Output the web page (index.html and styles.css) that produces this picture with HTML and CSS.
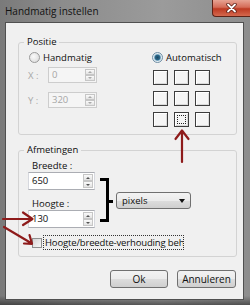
FILE: index.html
```html
<!DOCTYPE html>
<html lang="nl">
  <head>
    <meta charset="UTF-8" />
    <meta name="viewport" content="width=device-width, initial-scale=1.0" />
    <title>Handmatig instellen</title>
    <link rel="stylesheet" href="styles.css">
  </head>
  <body>
    <div class="window">
      <div class="titlebar">
        <span class="title">Handmatig instellen</span>
        <div class="close-btn">
          <svg width="11" height="10" viewBox="0 0 11 10">
            <path d="M2 1.5 L9 8.5 M9 1.5 L2 8.5" stroke="#5a1a10" stroke-width="3.4" stroke-linecap="round" />
            <path d="M2 1.5 L9 8.5 M9 1.5 L2 8.5" stroke="#fff" stroke-width="1.8" stroke-linecap="round" />
          </svg>
        </div>
      </div>
      <div class="client">
        <fieldset class="group group-pos">
          <legend>Positie</legend>
          <div class="pos-left">
            <div class="radio-row radio-manual"><span class="radio"></span><span>Handmatig</span></div>
            <div class="coord-row">
              <span class="coord-label">X :</span>
              <div class="spin-input disabled">
                <span class="value">0</span>
                <span class="spinner"><span class="up"></span><span class="down"></span></span>
              </div>
            </div>
            <div class="coord-row">
              <span class="coord-label">Y :</span>
              <div class="spin-input disabled">
                <span class="value">320</span>
                <span class="spinner"><span class="up"></span><span class="down"></span></span>
              </div>
            </div>
          </div>
          <div class="pos-right">
            <div class="radio-row"><span class="radio checked"></span><span>Automatisch</span></div>
            <div class="anchor-grid">
              <span class="cell"></span>
              <span class="cell"></span>
              <span class="cell"></span>
              <span class="cell"></span>
              <span class="cell"></span>
              <span class="cell"></span>
              <span class="cell"></span>
              <span class="cell focused"></span>
              <span class="cell"></span>
            </div>
          </div>
        </fieldset>

        <fieldset class="group group-size">
          <legend>Afmetingen</legend>
          <div class="size-row">
            <div class="size-fields">
              <div class="field-label">Breedte :</div>
              <div class="spin-input size-input">
                <span class="value">650</span>
                <span class="spinner"><span class="up"></span><span class="down"></span></span>
              </div>
              <div class="field-label second">Hoogte :</div>
              <div class="spin-input size-input">
                <span class="value">130</span>
                <span class="spinner"><span class="up"></span><span class="down"></span></span>
              </div>
            </div>
            <svg class="bracket" width="14" height="44" viewBox="0 0 14 44">
              <path d="M0 1.5 H7.5 V42.5 H0 M7.5 23.5 H13" fill="none" stroke="#000" stroke-width="3" />
            </svg>
            <div class="combo">pixels<span class="combo-arrow"></span></div>
          </div>
          <div class="check-row">
            <span class="checkbox"></span>
            <span class="check-label">Hoogte/breedte-verhouding behouden</span>
          </div>
        </fieldset>

        <div class="buttons">
          <button class="btn btn-ok">Ok</button>
          <button class="btn btn-cancel">Annuleren</button>
        </div>
      </div>

      <!-- red annotation arrows drawn over the dialog -->
      <svg class="annotations" width="250" height="305" viewBox="0 0 250 305">
        <g fill="none" stroke="#8e1b1b" stroke-width="2.2" stroke-linecap="round" stroke-linejoin="round">
          <path d="M182 162 V131 M175.5 139 L182 130.5 L188.5 139" />
          <path d="M3 219 H32 M23 212.5 L32.5 219 L23 225" />
          <path d="M4 227 L31 243 M24 243.5 L32 243.8 L29.5 235" />
        </g>
      </svg>
    </div>
  </body>
</html>
```

FILE: styles.css
```css
* {
  box-sizing: border-box;
}
body {
  margin: 0;
  width: 250px;
  height: 305px;
  overflow: hidden;
  font-family: "Open Sans", "Liberation Sans", sans-serif;
  font-size: 9.5px;
  color: #0e0e0e;
}
.window {
  position: relative;
  width: 250px;
  height: 305px;
  display: flex;
  flex-direction: column;
  background:
    linear-gradient(to bottom, transparent 97%, rgba(0, 0, 0, 0.45)),
    linear-gradient(to right, #7a7a7a, #8c8c8c 25%, #9b9b9b 65%, #8d8d8d);
}
.titlebar {
  height: 22px;
  display: flex;
  align-items: flex-start;
}
.title {
  padding: 5px 0 0 5px;
  font-size: 10px;
  line-height: 12px;
  color: #111;
}
.close-btn {
  margin-left: auto;
  width: 38px;
  height: 17px;
  display: flex;
  align-items: center;
  justify-content: center;
  border: 1px solid #5e2216;
  border-top: none;
  border-right: none;
  border-radius: 0 0 0 4px;
  background: linear-gradient(#e7a393, #d56c58 45%, #bd3a22 55%, #d4684e);
}
.client {
  margin-left: 5px;
  width: 239px;
  height: 278px;
  border: 1px solid #505050;
  background: #f0f0f0;
  padding: 13px 6px 0 12px;
}

/* group boxes */
.group {
  margin: 0;
  padding: 0;
  min-width: 0;
  border: 1px solid #d3d3d3;
  border-radius: 3px;
}
.group legend {
  margin-left: 5px;
  padding: 0 3px;
  line-height: 12px;
}
.group-pos {
  display: flex;
  padding: 3px 0 7px 0;
}
.group-size {
  margin-top: 9px;
  padding: 4px 0 6px 0;
}

/* radios */
.radio-row {
  display: flex;
  align-items: center;
  height: 13px;
}
.radio {
  flex: none;
  width: 11px;
  height: 11px;
  margin-right: 3px;
  border-radius: 50%;
  border: 1px solid #9a9a9a;
  background: radial-gradient(circle at 40% 40%, #fafafa, #d6d6d6);
}
.radio.checked {
  border-color: #6f8ea4;
  background: radial-gradient(circle, #1d4763 0, #2b6a8c 2.5px, #9fc2d6 3.3px, #e4edf2 4px);
}

/* position section */
.pos-left {
  flex: none;
  width: 133px;
}
.radio-manual {
  margin-left: 10px;
}
.coord-row {
  display: flex;
  align-items: center;
  margin: 3px 0 0 9px;
}
.coord-row + .coord-row {
  margin-top: 9px;
}
.coord-label {
  width: 20px;
  color: #a8a8a8;
}
.anchor-grid {
  display: grid;
  grid-template-columns: repeat(3, 15px);
  grid-auto-rows: 15px;
  gap: 6px;
  margin: 6px 0 0 1px;
}
.cell {
  border: 1px solid #3d3d3d;
  background: #f5f5f5;
  box-shadow: inset 1px 1px 0 #fff, inset -1px -1px 0 #dadada;
}
.cell.focused {
  outline: 1px dotted #222;
  outline-offset: -4px;
}

/* spin boxes */
.spin-input {
  display: flex;
  width: 49px;
  height: 16px;
  border: 1px solid #abadb3;
  border-left-color: #d6d8de;
  border-right-color: #d6d8de;
  background: #fff;
}
.spin-input.disabled {
  background: #f5f5f5;
  border-color: #cdcdcd;
  color: #a6a6a6;
}
.value {
  flex: 1;
  padding-left: 3px;
  line-height: 14px;
}
.size-input {
  width: 67px;
  height: 18px;
}
.size-input .value {
  line-height: 16px;
}
.spinner {
  display: flex;
  flex-direction: column;
  width: 10px;
  margin: 1px 1px 1px 0;
}
.spinner span {
  flex: 1;
  display: flex;
  align-items: center;
  justify-content: center;
  border: 1px solid #c6c6c6;
  background: linear-gradient(#fafafa, #e3e3e3);
}
.spinner .up::after,
.spinner .down::after {
  content: "";
  border-left: 2px solid transparent;
  border-right: 2px solid transparent;
}
.spinner .up::after {
  border-bottom: 2px solid #555;
}
.spinner .down::after {
  border-top: 2px solid #555;
}
.spin-input.disabled .spinner .up::after {
  border-bottom-color: #aaa;
}
.spin-input.disabled .spinner .down::after {
  border-top-color: #aaa;
}

/* size section */
.size-row {
  display: flex;
  align-items: flex-start;
}
.size-fields {
  padding-left: 9px;
}
.field-label {
  padding-left: 4px;
  line-height: 12px;
}
.field-label.second {
  margin-top: 8px;
}
.bracket {
  flex: none;
  margin: 18px 0 0 5px;
}
.combo {
  display: flex;
  align-items: center;
  width: 75px;
  height: 17px;
  margin: 32px 0 0 2px;
  padding-left: 5px;
  border: 1px solid #707070;
  border-radius: 3px;
  background: linear-gradient(#f3f3f3, #ebebeb 50%, #dddddd 51%, #cfcfcf);
}
.combo-arrow {
  margin-left: auto;
  margin-right: 5px;
  border-left: 3px solid transparent;
  border-right: 3px solid transparent;
  border-top: 4px solid #111;
}
.check-row {
  display: flex;
  align-items: center;
  height: 15px;
  margin-top: 7px;
  padding-left: 13px;
}
.checkbox {
  flex: none;
  width: 10px;
  height: 10px;
  border: 1px solid #8e8f8f;
  background: linear-gradient(135deg, #d4d4d4, #f7f7f7);
}
.check-label {
  width: 141px;
  height: 15px;
  margin-left: 1px;
  padding-left: 1px;
  border: 1px dotted #333;
  white-space: nowrap;
  overflow: hidden;
  line-height: 13px;
  letter-spacing: -0.15px;
}

/* dialog buttons */
.buttons {
  display: flex;
  justify-content: flex-end;
  gap: 9px;
  margin-top: 13px;
  padding-right: 1px;
}
.btn {
  height: 18px;
  padding: 0;
  border: 1px solid #707070;
  border-radius: 3px;
  background: linear-gradient(#f2f2f2, #ebebeb 50%, #dddddd 51%, #cfcfcf);
  font-family: inherit;
  font-size: 10px;
  color: #111;
}
.btn-ok {
  width: 58px;
}
.btn-cancel {
  width: 59px;
}
.annotations {
  position: absolute;
  top: 0;
  left: 0;
  pointer-events: none;
}
```
